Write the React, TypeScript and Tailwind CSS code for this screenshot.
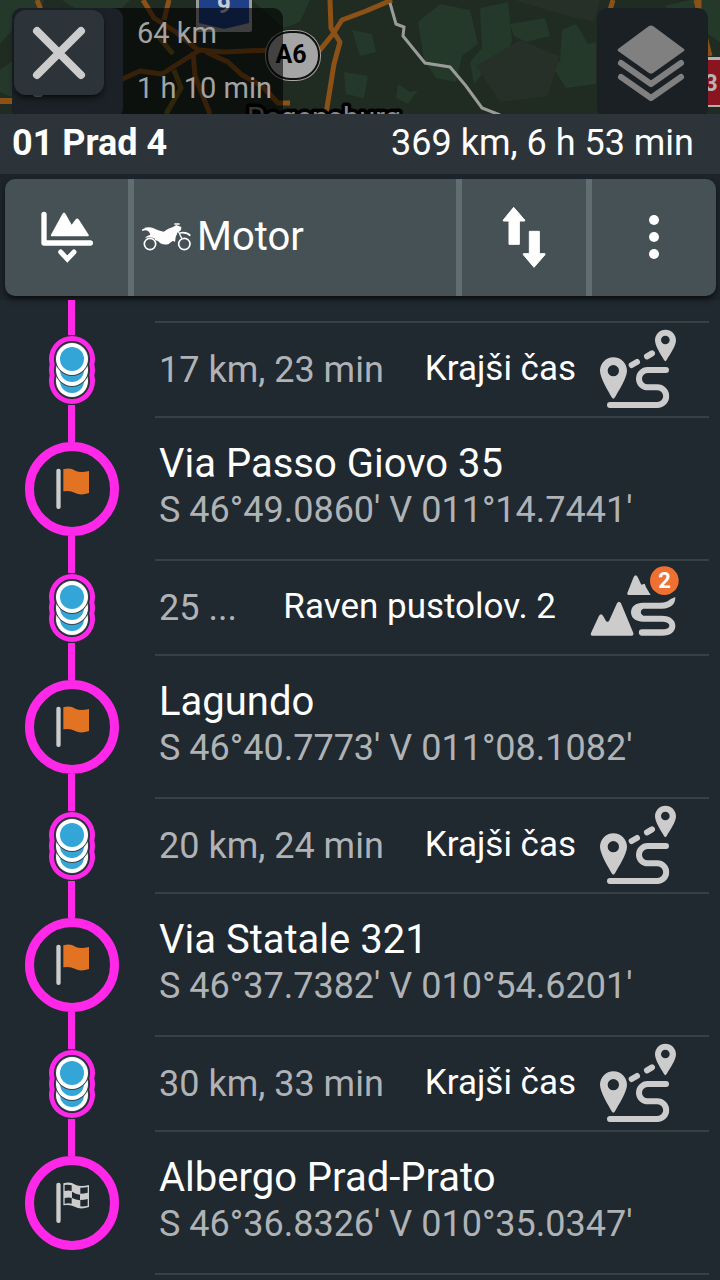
import React from 'react'

type LegKind = 'fastest' | 'adventure'

interface Leg {
  distance: string
  mode: string
  kind: LegKind
}

interface Stop {
  name: string
  coords: string
  isFinish?: boolean
}

interface Section {
  leg: Leg
  stop: Stop
}

const SECTIONS: Section[] = [
  {
    leg: { distance: '17 km, 23 min', mode: 'Krajši čas', kind: 'fastest' },
    stop: { name: 'Via Passo Giovo 35', coords: "S 46°49.0860' V 011°14.7441'" },
  },
  {
    leg: { distance: '25 ...', mode: 'Raven pustolov. 2', kind: 'adventure' },
    stop: { name: 'Lagundo', coords: "S 46°40.7773' V 011°08.1082'" },
  },
  {
    leg: { distance: '20 km, 24 min', mode: 'Krajši čas', kind: 'fastest' },
    stop: { name: 'Via Statale 321', coords: "S 46°37.7382' V 010°54.6201'" },
  },
  {
    leg: { distance: '30 km, 33 min', mode: 'Krajši čas', kind: 'fastest' },
    stop: { name: 'Albergo Prad-Prato', coords: "S 46°36.8326' V 010°35.0347'", isFinish: true },
  },
]

/* ---------- Icons ---------- */

const RouteIcon = () => (
  <svg viewBox="120 57 240 246" className="h-[82px] w-20 shrink-0" aria-hidden="true">
    <g fill="none" stroke="#cccccc" strokeWidth="18" strokeLinecap="round">
      <path d="M318 180H263A26 26 0 0 0 263 232H292A26 26 0 0 1 292 285H150" />
      <path d="M215 165L231 156M261 139L276 130" />
    </g>
    <g fill="#cccccc" fillRule="evenodd">
      <path d="M160 142C138 142 120 160 120 182C120 204 145 243 155 262Q160 270 165 262C175 243 201 204 201 182C201 160 183 142 160 142ZM160 165A17 17 0 1 1 160 199A17 17 0 1 1 160 165Z" />
      <path d="M316 59C299 59 285 73 285 91C285 108 303 135 312 150Q316 157 320 150C329 135 348 108 348 91C348 73 334 59 316 59ZM316 77A13 13 0 1 1 316 103A13 13 0 1 1 316 77Z" />
    </g>
  </svg>
)

const AdventureIcon = () => (
  <svg viewBox="60 45 300 258" className="h-[86px] w-[100px] shrink-0" aria-hidden="true">
    <path
      d="M93 249L117 197Q123 188 129 197L138 213Q144 219 148 211L171 160Q177 150 183 160L220 249Q222 257 214 257H98Q90 257 93 249Z"
      fill="#cccccc"
    />
    <path d="M202 129L221 81Q227 70 233 81L244 104L254 101L258 112L272 135H206Q200 135 202 129Z" fill="#cccccc" />
    <path
      d="M346 141Q346 175 306 176H250A11 11 0 0 0 250 197H304C334 197 346 212 346 227C346 245 332 257 306 257H246A9 9 0 0 1 246 238H304C320 238 328 234 328 227C328 219 318 215 304 215H250C224 215 213 202 213 187C213 170 226 158 250 158H300Q322 158 332 147Z"
      fill="#cccccc"
    />
    <circle cx="313" cy="92" r="43" fill="#ee7132" />
    <text x="314" y="115" textAnchor="middle" fontSize="66" fontWeight="700" fill="#ffffff">
      2
    </text>
  </svg>
)

const FlagIcon = () => (
  <svg viewBox="-60 -66 120 132" className="h-11 w-10" aria-hidden="true">
    <rect x="-47" y="-61" width="13" height="121" rx="6" fill="#cccccc" />
    <path d="M-26 -59Q-5 -65 10 -55Q25 -47 51 -54V12Q25 21 8 11Q-6 3 -26 7Z" fill="#e27322" />
  </svg>
)

const FinishIcon = () => (
  <svg viewBox="-60 -66 120 132" className="h-11 w-10" aria-hidden="true">
    <rect x="-47" y="-61" width="13" height="121" rx="6" fill="#cccccc" />
    <path d="M-26 -59Q-5 -65 10 -55Q25 -47 51 -54V12Q25 21 8 11Q-6 3 -26 7Z" fill="#cccccc" />
    <g fill="#202830">
      <path d="M-22 -54Q-10 -56 -1 -53V-36Q-10 -39 -22 -36Z" />
      <path d="M-22 -15Q-10 -18 -1 -15V2Q-10 -1 -22 2Z" />
      <path d="M0 -34Q12 -26 24 -25V-8Q12 -9 0 -15Z" />
      <path d="M25 -46Q36 -45 47 -48V-31Q36 -28 25 -28Z" />
      <path d="M25 -9Q36 -9 47 -12V8Q36 11 25 10Z" />
    </g>
  </svg>
)

const ViaPointsIcon = () => (
  <svg viewBox="0 0 46 68" className="my-px h-[68px] w-[46px]" aria-hidden="true">
    {[45, 34, 23].map((y) => (
      <circle key={y} cx="23" cy={y} r="23" fill="#ff28e8" />
    ))}
    {[45, 34, 23].map((y) => (
      <circle key={y} cx="23" cy={y} r="18" fill="#202830" />
    ))}
    {[45, 34, 23].map((y) => (
      <g key={y}>
        <circle cx="23" cy={y} r="17" fill="#39454b" />
        <circle cx="23" cy={y} r="16" fill="#ffffff" />
        <circle cx="23" cy={y} r="12" fill="#33a5d6" />
      </g>
    ))}
  </svg>
)

const ElevationIcon = () => (
  <svg viewBox="110 118 180 168" className="h-14 w-[60px]" aria-hidden="true">
    <path d="M131 134V220H270" fill="none" stroke="#ffffff" strokeWidth="16" strokeLinecap="round" strokeLinejoin="round" />
    <path
      d="M152 195L186 133Q191 124 196 133L214 165L225 150Q230 143 236 150L265 195Q267 200 262 200H155Q150 200 152 195Z"
      fill="#ffffff"
    />
    <path d="M181 247L201 268L221 247" fill="none" stroke="#ffffff" strokeWidth="15" strokeLinecap="round" />
  </svg>
)

const MotorcycleIcon = () => (
  <svg viewBox="427 154 153 90" className="h-[30px] w-[51px] shrink-0" aria-hidden="true">
    <g fill="none" stroke="#ffffff">
      <circle cx="451" cy="220" r="17" strokeWidth="5" />
      <circle cx="554" cy="220" r="17" strokeWidth="5" />
      <path d="M466 206L484 210" strokeWidth="5" />
      <path d="M536 182L546 203" strokeWidth="4" />
      <path d="M524 160H540" strokeWidth="4" />
      <path d="M541 187Q560 183 572 195" strokeWidth="5" />
      <path d="M427 179Q437 173 450 180" strokeWidth="5" />
    </g>
    <path
      d="M433 172Q448 167 462 173Q474 180 492 183Q506 172 520 169L530 163L545 169L544 179L534 185L528 200L526 214L520 210L507 220Q495 224 482 218Q474 207 460 201Q447 197 435 203Q442 194 452 192Q450 182 433 172Z"
      fill="#ffffff"
    />
  </svg>
)

const SwapIcon = () => (
  <svg viewBox="420 104 144 192" className="h-16 w-12" aria-hidden="true">
    <g fill="#ffffff" stroke="#ffffff" strokeWidth="3" strokeLinejoin="round">
      <path d="M461 111L494 149V152H478V222H447V152H430V149Z" />
      <path d="M522 291L555 253V250H538V183H508V250H490V253Z" />
    </g>
  </svg>
)

const MoreIcon = () => (
  <svg viewBox="851 126 60 150" className="h-[50px] w-5" fill="#ffffff" aria-hidden="true">
    <circle cx="881" cy="150" r="15" />
    <circle cx="881" cy="201" r="15" />
    <circle cx="881" cy="252" r="15" />
  </svg>
)

const LayersIcon = () => (
  <svg viewBox="0 0 68 78" className="h-[78px] w-[68px]" aria-hidden="true">
    <path d="M32 1Q34 0 36 1L67 24Q68 25 67 26L36 48Q34 49 32 48L1 26Q0 25 1 24Z" fill="#808080" />
    <path
      d="M4 38L34 59L64 38M4 52L34 73L64 52"
      fill="none"
      stroke="#808080"
      strokeWidth="6"
      strokeLinecap="round"
      strokeLinejoin="round"
    />
  </svg>
)

const CloseIcon = () => (
  <svg viewBox="0 0 54 54" className="h-[54px] w-[54px]" aria-hidden="true">
    <path d="M5 5L49 49M49 5L5 49" stroke="#cccccc" strokeWidth="8" strokeLinecap="round" />
  </svg>
)

/* ---------- Map strip behind the header ---------- */

const MapBackground = () => (
  <svg
    viewBox="0 0 720 114"
    preserveAspectRatio="xMidYMin slice"
    className="absolute inset-0 h-full w-full"
    aria-hidden="true"
  >
    <rect width="720" height="114" fill="#202b22" />
    {/* forests */}
    <g fill="#24392a">
      <path d="M0 0H44L38 22L14 28L0 44ZM0 70L14 60V98L0 92Z" />
      <path d="M62 0H130L122 8H74Z" />
      <path d="M418 22L440 4L470 10L478 44L462 56L456 82L436 78L424 60Z" />
      <path d="M480 8L508 2L512 40L506 62L484 72L474 84L470 62L482 48Z" />
      <path d="M510 24L545 18L550 36L526 42L514 36Z" />
      <path d="M562 30L576 24L588 44L596 42V84L566 88L556 72L534 74L540 56L560 62Z" />
      <path d="M398 84L410 92L418 90L408 104L396 98Z" />
      <path d="M352 30L372 34L376 52L360 56Z" />
      <path d="M344 72L368 76L364 98L346 94Z" />
      <path d="M252 0H310L300 22L284 28Z" />
      <path d="M664 6L690 0H720V42L708 34Z" />
    </g>
    <g fill="#262f28">
      <path d="M476 66L520 40L560 56L548 96L500 102Z" />
      <path d="M514 0H600L594 22L560 14Z" />
    </g>
    {/* roads */}
    <g fill="none" stroke="#8c5117" strokeWidth="5" strokeLinejoin="round">
      <path d="M37 0L41 10" />
      <path d="M0 101H14" strokeWidth="6" />
      <path d="M143 0L154 18L176 32L198 50L224 52L270 50L320 50L333 34L342 20L366 11L392 0" />
      <path d="M169 0L164 20" />
      <path d="M120 80L140 71L162 74L184 60L200 50" />
      <path d="M193 52L195 76L202 94L210 114" />
      <path d="M206 52L228 62L242 75L262 86L278 103H290" />
      <path d="M330 0L331 28L340 42L334 64L326 114" />
      <path d="M613 0L610 10M699 0V10M696 0L710 56" />
    </g>
    <g fill="none" stroke="#776017" strokeWidth="5">
      <path d="M158 36L173 54M174 70L181 88L166 114" />
    </g>
    <path
      d="M390 3L396 24L404 27L403 36L425 63L450 67L466 86L482 108L500 115"
      fill="none"
      stroke="#9a9c9a"
      strokeWidth="3"
    />
    {/* road shields */}
    <path d="M196 -10H252V31L250 32H198L196 31Z" fill="#9a9c9a" />
    <path d="M199 -10H249V23L224 29L199 23Z" fill="#1f4087" />
    <text x="224" y="13" textAnchor="middle" fontSize="24" fontWeight="700" fill="#c8cbd0">
      9
    </text>
    <rect x="265" y="30" width="56" height="51" rx="25" fill="#a5a5a5" />
    <rect x="267" y="32" width="52" height="47" rx="23" fill="#a5a5a5" stroke="#111111" strokeWidth="2" />
    <text x="291" y="63" textAnchor="middle" fontSize="25" fontWeight="700" fill="#000000">
      A6
    </text>
    <rect x="690" y="57" width="40" height="50" fill="#b0b0b0" />
    <rect x="692" y="60" width="40" height="45" fill="#8a1520" />
    <text x="711" y="91" textAnchor="middle" fontSize="23" fontWeight="700" fill="#b5b5b5">
      3
    </text>
    <text
      x="324"
      y="128"
      textAnchor="middle"
      fontSize="29"
      fill="#8a8a8a"
      stroke="#000000"
      strokeWidth="7"
      strokeLinejoin="round"
      paintOrder="stroke"
    >
      Regensburg
    </text>
  </svg>
)

const MapHeader = () => (
  <header className="relative h-[114px] overflow-hidden">
    <MapBackground />
    <div className="relative flex items-start justify-between pt-2 pr-3 pl-3">
      <div className="flex rounded-[10px] bg-black/60">
        <div className="relative h-[110px] w-[111px] rounded-[10px] bg-[#1b2126]">
          <span className="absolute top-[80px] left-[20px] h-[9px] w-3 rounded-full bg-[#6d7173]" />
          <button
            type="button"
            aria-label="Zapri"
            className="absolute top-0.5 left-0.5 flex h-[85px] w-[90px] items-center justify-center rounded-xl bg-[#2c343a] shadow-md shadow-black/50"
          >
            <CloseIcon />
          </button>
        </div>
        <div className="w-40 pl-3.5 text-[29px] leading-[55px] whitespace-nowrap text-[#a3a3a3]">
          <p className="-mt-0.5">64 km</p>
          <p>1 h 10 min</p>
        </div>
      </div>
      <button
        type="button"
        aria-label="Sloji"
        className="flex h-[110px] w-[111px] items-center justify-center rounded-[10px] bg-[#1b2024] pt-0.5 pr-[3px]"
      >
        <LayersIcon />
      </button>
    </div>
  </header>
)

const Toolbar = () => (
  <div className="bg-[#1d242b] pt-[5px] pr-1 pb-1 pl-[5px]">
    <div className="flex h-[117px] divide-x-6 divide-[#616e6f] overflow-hidden rounded-[10px] bg-[#455154] shadow-md shadow-black/50">
      <button type="button" aria-label="Višinski profil" className="flex w-[129px] items-center justify-center pb-0.5">
        <ElevationIcon />
      </button>
      <button type="button" className="flex flex-1 items-center gap-1 pb-0.5 pl-2 text-left text-[40px] text-white">
        <MotorcycleIcon />
        Motor
      </button>
      <button type="button" aria-label="Obrni pot" className="flex w-[130px] items-center justify-center pb-0.5">
        <SwapIcon />
      </button>
      <button type="button" aria-label="Več" className="flex w-[124px] items-center justify-center pb-0.5">
        <MoreIcon />
      </button>
    </div>
  </div>
)

/* ---------- Itinerary ---------- */

const Line = ({ className = 'bg-[#ff28e8]' }: { className?: string }) => (
  <span className={`mr-px w-[7px] flex-1 ${className}`} />
)

const LegRow: React.FC<{ leg: Leg }> = ({ leg }) => (
  <li className="flex h-[95px]">
    <div className="flex w-36 shrink-0 flex-col items-center">
      <Line className="bg-[#ff28e8] pt-0.5" />
      <ViaPointsIcon />
      <Line />
    </div>
    <div className="mr-[11px] ml-[11px] flex flex-1 items-center border-t-2 border-[#364146] pr-[29px] pl-1">
      <span className="flex-1 text-[36px] whitespace-nowrap text-[#b0b3b6]">{leg.distance}</span>
      <span className="mr-6 text-[35px] whitespace-nowrap text-white">{leg.mode}</span>
      {leg.kind === 'fastest' ? <RouteIcon /> : <AdventureIcon />}
    </div>
  </li>
)

const StopRow: React.FC<{ stop: Stop }> = ({ stop }) => (
  <li className="flex h-[143px]">
    <div className="flex w-36 shrink-0 flex-col items-center">
      <Line className="bg-[#ff28e8] pt-0.5" />
      <span className="flex h-[94px] w-[94px] items-center justify-center rounded-full border-9 border-[#ff28e8]">
        {stop.isFinish ? <FinishIcon /> : <FlagIcon />}
      </span>
      <Line className={stop.isFinish ? 'bg-transparent' : 'bg-[#ff28e8]'} />
    </div>
    <div className="mr-[11px] ml-[11px] flex-1 border-t-2 border-[#364146] pt-[23px] pl-1 whitespace-nowrap">
      <p className="text-[40px] leading-[46px] text-white">{stop.name}</p>
      <p className="text-[36px] leading-[46px] text-[#b0b3b6]">{stop.coords}</p>
    </div>
  </li>
)

export default function App() {
  return (
    <main className="min-h-screen overflow-hidden bg-[#202830] font-['Roboto',sans-serif]">
      <MapHeader />
      <div className="flex h-[60px] items-center justify-between bg-[#2c343a] pr-[26px] pb-0.5 pl-3 text-[36px] text-white">
        <h1 className="font-bold">01 Prad 4</h1>
        <p>369 km, 6 h 53 min</p>
      </div>
      <Toolbar />
      <ol>
        {/* tail of the previous stop */}
        <li className="flex h-[21px] w-36 flex-col items-center">
          <Line />
        </li>
        {SECTIONS.map(({ leg, stop }) => (
          <React.Fragment key={stop.coords}>
            <LegRow leg={leg} />
            <StopRow stop={stop} />
          </React.Fragment>
        ))}
      </ol>
      <div className="mr-[11px] ml-[155px] border-t-2 border-[#364146]" />
    </main>
  )
}
